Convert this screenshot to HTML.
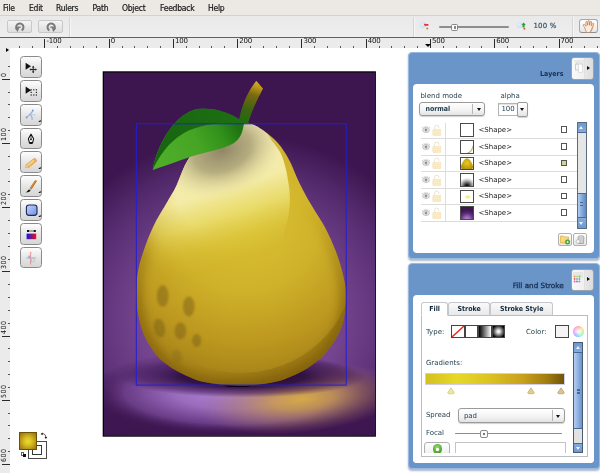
<!DOCTYPE html>
<html><head><meta charset="utf-8"><title>Editor</title>
<style>
*{box-sizing:border-box;margin:0;padding:0}
html,body{width:600px;height:473px;overflow:hidden;background:#fff}
body{position:relative;will-change:transform;font-family:"DejaVu Sans","Liberation Sans",sans-serif;font-size:7px;color:#1f3a4a}
.abs{position:absolute}
#menubar{position:absolute;left:0;top:0;width:600px;height:15px;background:#ece9e5}
#menubar span{position:absolute;top:2.6px;-webkit-text-stroke:0.2px #1a1a1a;font-family:"DejaVu Sans","Liberation Sans",sans-serif;font-stretch:condensed;font-size:8.5px;letter-spacing:-.25px;color:#1a1a1a;line-height:10px}
#toolbar{position:absolute;left:0;top:15px;width:600px;height:23.2px;background:linear-gradient(#e9e9e9,#eeeeee);border-top:1px solid #d2d2d2;border-bottom:1.4px solid #606060}
.tbtn{position:absolute;top:3.7px;height:13.6px;width:25.2px;border:1px solid #c8c8c8;border-radius:2px;background:linear-gradient(#f4f4f4,#dedede)}
.sep{position:absolute;top:0.5px;width:1px;height:20px;background:#d4d4d4;border-right:1px solid #f6f6f6;box-sizing:content-box}
#hruler{position:absolute;left:0;top:38px;width:600px;height:10px;background:#ebebeb}
#vruler{position:absolute;left:0;top:48px;width:10.4px;height:425px;background:#ebebeb;overflow:hidden}
.ht{position:absolute;width:1px;background:#555}
.vt{position:absolute;height:1px;background:#555}
.hn{position:absolute;top:-0.5px;letter-spacing:-.2px;font-size:7px;line-height:7px;color:#111;font-family:"DejaVu Sans",sans-serif}
.vn{position:absolute;left:1.2px;letter-spacing:.55px;font-stretch:condensed;font-size:7px;line-height:7px;color:#111;transform-origin:0 0;transform:rotate(-90deg);white-space:nowrap;font-family:"DejaVu Sans",sans-serif}
.tool{position:absolute;left:19.6px;width:22.2px;height:21.9px;border:1px solid #8a8a8a;border-radius:3.5px;background:linear-gradient(#fdfdfd,#e2e2e2 60%,#d6d6d6)}
.panel{position:absolute;left:407.6px;width:192.4px;background:#6a95c9;border:1px solid #9bb9de;border-radius:4px;box-shadow:0 1.5px 2px rgba(80,100,140,.45)}
.pinner{position:absolute;left:4.8px;right:5.3px;background:#fff;border-radius:4px}
.ptitle{position:absolute;font-weight:bold;font-stretch:condensed;color:#1b2f55;font-size:7px;white-space:nowrap;text-align:right}
.pbtn{position:absolute;width:23px;height:22.6px;border:1px solid #9aa3ad;border-radius:3px;background:linear-gradient(90deg,#fafafa 0,#f0f0f0 56%,#bdbdbd 57%,#e8e8e8 60%,#dcdcdc 100%)}
.lbl{position:absolute;white-space:nowrap;line-height:9px}
.combo{position:absolute;border:1px solid #9a9a9a;border-radius:3px;background:linear-gradient(#ffffff,#f3f3f3 60%,#e3e3e3);box-shadow:0 1px 1px rgba(0,0,0,.18)}
.arrow{position:absolute;width:0;height:0;border-left:2.8px solid transparent;border-right:2.8px solid transparent;border-top:3.6px solid #111}
.row{position:absolute;left:8px;width:156px;height:16.55px;border-bottom:1px solid #dcdcdc}
.thumb{position:absolute;left:38.3px;top:1px;width:14px;height:13.5px;border:1px solid #4a4a4a;background:#fff;overflow:hidden}
.chk{position:absolute;left:139.3px;top:4px;width:6.5px;height:6.5px;border:1px solid #555;background:#fff}
.shape{position:absolute;left:57px;top:3.4px;font-size:7px;line-height:9px;color:#222}

.b{font-weight:bold;font-stretch:condensed;font-size:7px}
.arrowr{position:absolute;width:0;height:0;border-top:2.4px solid transparent;border-bottom:2.4px solid transparent;border-left:3px solid #111}
.sbtn{position:absolute;width:14px;height:13px;border:1px solid #b0b0b0;border-radius:2px;background:linear-gradient(#fff,#e6e6e6)}
.tab{position:absolute;top:6.4px;height:14px;border:1px solid #c4c7cb;border-bottom:1px solid #b9bdc2;border-radius:3px 3px 0 0;background:linear-gradient(#fafafa,#e9e9e9);text-align:center;font-weight:bold;font-stretch:condensed;font-size:7px;line-height:12px;color:#14283c}
.tab.sel{background:#fff;border-bottom-color:#fff}
.sw{position:absolute;width:13.5px;height:12.5px;border:1px solid #444}
</style></head><body>

<div id="menubar">
<span style="left:3px">File</span><span style="left:29px">Edit</span><span style="left:56px">Rulers</span><span style="left:92.5px">Path</span><span style="left:122px">Object</span><span style="left:160px">Feedback</span><span style="left:208px">Help</span>
</div>

<div id="toolbar">
 <div class="tbtn" style="left:7.3px"><svg style="position:absolute;left:0;top:0" width="24" height="12" viewBox="0 0 24 12"><g transform=""><g transform="translate(12 6.2) scale(1.18) translate(-12 -5.9)"><path d="M9.6,8 A3.1,3.1 0 1 1 13.4,8.55" fill="none" stroke="#7a7a7a" stroke-width="1.7"/><path d="M7.6,6.6 L11.4,6.3 L10,10 Z" fill="#7a7a7a"/><path d="M9.4,5.9 L12.6,5.9" stroke="#7a7a7a" stroke-width="1.2"/></g></g></svg></div>
 <div class="tbtn" style="left:38.3px"><svg style="position:absolute;left:0;top:0" width="24" height="12" viewBox="0 0 24 12"><g transform="translate(24 0) scale(-1 1)"><g transform="translate(12 6.2) scale(1.18) translate(-12 -5.9)"><path d="M9.6,8 A3.1,3.1 0 1 1 13.4,8.55" fill="none" stroke="#7a7a7a" stroke-width="1.7"/><path d="M7.6,6.6 L11.4,6.3 L10,10 Z" fill="#7a7a7a"/><path d="M9.4,5.9 L12.6,5.9" stroke="#7a7a7a" stroke-width="1.2"/></g></g></svg></div>
 <div class="sep" style="left:69px"></div>
 <div class="sep" style="left:412.5px"></div>
 <div class="sep" style="left:571.5px"></div>
 <!-- zoom slider -->
 <svg style="position:absolute;left:418.6px;top:5.2px" width="12" height="10" viewBox="0 0 12 10"><circle cx="3.8" cy="4.2" r="3.1" fill="#d3e2f5"/><circle cx="3.2" cy="3.6" r="1.6" fill="#e4eefa"/><circle cx="8.2" cy="7.4" r="1" fill="#c08438"/><path d="M4.8,3.6 L6.4,2.2 L6.4,3 L9.4,3 L9.4,4.8 L6.4,4.8 L6.4,5.4Z" fill="#e8303c"/></svg>
 <div class="abs" style="left:439px;top:10.3px;width:70px;height:1.5px;background:#8e8e8e;border-radius:1px"></div>
 <div class="abs" style="left:451.3px;top:7.8px;width:7.2px;height:7.4px;border:1px solid #858585;border-radius:1.5px;background:#fafafa"><div class="abs" style="left:1.6px;top:1.6px;width:2px;height:2.2px;border-left:.7px solid #888;border-right:.7px solid #888"></div></div>
 <svg style="position:absolute;left:516.2px;top:5.2px" width="12" height="10" viewBox="0 0 12 10"><circle cx="3.8" cy="4.2" r="3.1" fill="#d3e2f5"/><circle cx="3.2" cy="3.6" r="1.6" fill="#e4eefa"/><circle cx="8.4" cy="7.8" r="1" fill="#d8603c"/><path d="M7.6,1.6 L9.8,4 L8.6,4 L8.6,6.4 L6.6,6.4 L6.6,4 L5.4,4Z" fill="#2aa030"/></svg>
 <div class="abs" style="left:533.4px;top:5.9px;font-size:7px;line-height:9px;color:#35566a;letter-spacing:0.2px;-webkit-text-stroke:.2px #35566a">100 %</div>
 <div class="abs" style="left:579.3px;top:3px;width:18.6px;height:14.4px;border:1px solid #a8a8a8;border-bottom-color:#909090;border-radius:3px;background:linear-gradient(#fff,#e6e6e6)"><svg style="position:absolute;left:1px;top:0px" width="16" height="13" viewBox="0 0 16 13"><g transform="translate(-0.6 -0.8) scale(1.32)"><path d="M3.4,6.6 C2.6,5.4 1.8,4.6 2.3,4.1 C2.9,3.6 3.7,4.5 4.3,5.3 L4.1,2.3 C4.1,1.5 5.1,1.5 5.2,2.3 L5.5,4.6 L5.7,1.6 C5.8,0.8 6.8,0.8 6.8,1.6 L6.9,4.6 L7.5,2.0 C7.7,1.3 8.6,1.5 8.5,2.3 L8.2,5.0 L9.1,3.4 C9.5,2.8 10.3,3.2 10.0,3.9 C9.4,5.4 9.2,7.0 8.4,8.4 C7.8,9.6 7.3,10.2 5.8,10.2 C4.600,10.2 4.0,9.0 3.4,6.6 Z" fill="#fbeee0" stroke="#c07840" stroke-width=".55" stroke-linejoin="round"/><path d="M7.4,9.6 C8.4,8.6 9,6.6 9.4,5" fill="none" stroke="#d8945c" stroke-width=".9" opacity=".7"/></g></svg></div>
</div>

<div id="hruler">
<div class="ht" style="left:18.6px;top:7.8px;height:2.2px"></div>
<div class="ht" style="left:31.5px;top:7.8px;height:2.2px"></div>
<div class="ht" style="left:44.3px;top:1px;height:9px;background:#2a2a2a"></div>
<div class="hn" style="left:46.4px">-100</div>
<div class="ht" style="left:57.2px;top:7.8px;height:2.2px"></div>
<div class="ht" style="left:70.0px;top:7.8px;height:2.2px"></div>
<div class="ht" style="left:82.9px;top:7.8px;height:2.2px"></div>
<div class="ht" style="left:95.7px;top:7.8px;height:2.2px"></div>
<div class="ht" style="left:108.6px;top:1px;height:9px;background:#2a2a2a"></div>
<div class="hn" style="left:110.7px">0</div>
<div class="ht" style="left:121.5px;top:7.8px;height:2.2px"></div>
<div class="ht" style="left:134.3px;top:7.8px;height:2.2px"></div>
<div class="ht" style="left:147.2px;top:7.8px;height:2.2px"></div>
<div class="ht" style="left:160.0px;top:7.8px;height:2.2px"></div>
<div class="ht" style="left:172.9px;top:1px;height:9px;background:#2a2a2a"></div>
<div class="hn" style="left:175.0px">100</div>
<div class="ht" style="left:185.7px;top:7.8px;height:2.2px"></div>
<div class="ht" style="left:198.6px;top:7.8px;height:2.2px"></div>
<div class="ht" style="left:211.4px;top:7.8px;height:2.2px"></div>
<div class="ht" style="left:224.3px;top:7.8px;height:2.2px"></div>
<div class="ht" style="left:237.1px;top:1px;height:9px;background:#2a2a2a"></div>
<div class="hn" style="left:239.2px">200</div>
<div class="ht" style="left:250.0px;top:7.8px;height:2.2px"></div>
<div class="ht" style="left:262.8px;top:7.8px;height:2.2px"></div>
<div class="ht" style="left:275.7px;top:7.8px;height:2.2px"></div>
<div class="ht" style="left:288.6px;top:7.8px;height:2.2px"></div>
<div class="ht" style="left:301.4px;top:1px;height:9px;background:#2a2a2a"></div>
<div class="hn" style="left:303.5px">300</div>
<div class="ht" style="left:314.3px;top:7.8px;height:2.2px"></div>
<div class="ht" style="left:327.1px;top:7.8px;height:2.2px"></div>
<div class="ht" style="left:340.0px;top:7.8px;height:2.2px"></div>
<div class="ht" style="left:352.8px;top:7.8px;height:2.2px"></div>
<div class="ht" style="left:365.7px;top:1px;height:9px;background:#2a2a2a"></div>
<div class="hn" style="left:367.8px">400</div>
<div class="ht" style="left:378.5px;top:7.8px;height:2.2px"></div>
<div class="ht" style="left:391.4px;top:7.8px;height:2.2px"></div>
<div class="ht" style="left:404.2px;top:7.8px;height:2.2px"></div>
<div class="ht" style="left:417.1px;top:7.8px;height:2.2px"></div>
<div class="ht" style="left:429.9px;top:1px;height:9px;background:#2a2a2a"></div>
<div class="hn" style="left:432.0px">500</div>
<div class="ht" style="left:442.8px;top:7.8px;height:2.2px"></div>
<div class="ht" style="left:455.7px;top:7.8px;height:2.2px"></div>
<div class="ht" style="left:468.5px;top:7.8px;height:2.2px"></div>
<div class="ht" style="left:481.4px;top:7.8px;height:2.2px"></div>
<div class="ht" style="left:494.2px;top:1px;height:9px;background:#2a2a2a"></div>
<div class="hn" style="left:496.3px">600</div>
<div class="ht" style="left:507.1px;top:7.8px;height:2.2px"></div>
<div class="ht" style="left:519.9px;top:7.8px;height:2.2px"></div>
<div class="ht" style="left:532.8px;top:7.8px;height:2.2px"></div>
<div class="ht" style="left:545.6px;top:7.8px;height:2.2px"></div>
<div class="ht" style="left:558.5px;top:1px;height:9px;background:#2a2a2a"></div>
<div class="hn" style="left:560.6px">700</div>
<div class="ht" style="left:571.3px;top:7.8px;height:2.2px"></div>
<div class="ht" style="left:584.2px;top:7.8px;height:2.2px"></div>
<div class="ht" style="left:597.1px;top:7.8px;height:2.2px"></div>
</div>
<div id="vruler">
<div class="vt" style="top:17.9px;left:8.3px;width:1.7px"></div>
<div class="vt" style="top:30.7px;left:2px;width:8px;background:#2a2a2a"></div>
<div class="vn" style="top:28.7px">0</div>
<div class="vt" style="top:43.5px;left:8.3px;width:1.7px"></div>
<div class="vt" style="top:56.4px;left:8.3px;width:1.7px"></div>
<div class="vt" style="top:69.2px;left:8.3px;width:1.7px"></div>
<div class="vt" style="top:82.1px;left:8.3px;width:1.7px"></div>
<div class="vt" style="top:94.9px;left:2px;width:8px;background:#2a2a2a"></div>
<div class="vn" style="top:92.9px">100</div>
<div class="vt" style="top:107.7px;left:8.3px;width:1.7px"></div>
<div class="vt" style="top:120.6px;left:8.3px;width:1.7px"></div>
<div class="vt" style="top:133.4px;left:8.3px;width:1.7px"></div>
<div class="vt" style="top:146.3px;left:8.3px;width:1.7px"></div>
<div class="vt" style="top:159.1px;left:2px;width:8px;background:#2a2a2a"></div>
<div class="vn" style="top:157.1px">200</div>
<div class="vt" style="top:171.9px;left:8.3px;width:1.7px"></div>
<div class="vt" style="top:184.8px;left:8.3px;width:1.7px"></div>
<div class="vt" style="top:197.6px;left:8.3px;width:1.7px"></div>
<div class="vt" style="top:210.5px;left:8.3px;width:1.7px"></div>
<div class="vt" style="top:223.3px;left:2px;width:8px;background:#2a2a2a"></div>
<div class="vn" style="top:221.3px">300</div>
<div class="vt" style="top:236.1px;left:8.3px;width:1.7px"></div>
<div class="vt" style="top:249.0px;left:8.3px;width:1.7px"></div>
<div class="vt" style="top:261.8px;left:8.3px;width:1.7px"></div>
<div class="vt" style="top:274.7px;left:8.3px;width:1.7px"></div>
<div class="vt" style="top:287.5px;left:2px;width:8px;background:#2a2a2a"></div>
<div class="vn" style="top:285.5px">400</div>
<div class="vt" style="top:300.3px;left:8.3px;width:1.7px"></div>
<div class="vt" style="top:313.2px;left:8.3px;width:1.7px"></div>
<div class="vt" style="top:326.0px;left:8.3px;width:1.7px"></div>
<div class="vt" style="top:338.9px;left:8.3px;width:1.7px"></div>
<div class="vt" style="top:351.7px;left:2px;width:8px;background:#2a2a2a"></div>
<div class="vn" style="top:349.7px">500</div>
<div class="vt" style="top:364.5px;left:8.3px;width:1.7px"></div>
<div class="vt" style="top:377.4px;left:8.3px;width:1.7px"></div>
<div class="vt" style="top:390.2px;left:8.3px;width:1.7px"></div>
<div class="vt" style="top:403.1px;left:8.3px;width:1.7px"></div>
<div class="vt" style="top:415.9px;left:2px;width:8px;background:#2a2a2a"></div>
<div class="vn" style="top:413.9px">600</div>
<div class="vt" style="top:428.7px;left:8.3px;width:1.7px"></div>
</div>
<!-- corner arrow -->
<div class="abs" style="left:5.6px;top:48.4px;width:0;height:0;border-top:2.8px solid transparent;border-bottom:2.8px solid transparent;border-left:3.2px solid #000"></div>
<div class="abs" style="left:425.2px;top:44.3px;width:0;height:0;border-left:3px solid transparent;border-right:3px solid transparent;border-top:3.2px solid #000"></div>

<!-- CANVAS -->
<svg class="abs" style="left:10px;top:48px" width="398" height="425" viewBox="10 48 398 425">
<defs>
 <radialGradient id="bg1" gradientUnits="userSpaceOnUse" cx="240" cy="318" r="200" gradientTransform="translate(240 318) scale(1 0.92) translate(-240 -318)">
  <stop offset="0" stop-color="#8656a4"/>
  <stop offset="0.5" stop-color="#74448e"/>
  <stop offset="0.78" stop-color="#582e72"/>
  <stop offset="1" stop-color="#3d1650"/>
 </radialGradient>
 <linearGradient id="botdark" gradientUnits="userSpaceOnUse" x1="0" y1="372" x2="0" y2="436">
  <stop offset="0" stop-color="#3d1650" stop-opacity="0"/>
  <stop offset="0.35" stop-color="#3d1650" stop-opacity=".85"/>
  <stop offset="1" stop-color="#3d1650" stop-opacity="1"/>
 </linearGradient>
 <radialGradient id="floor" gradientUnits="userSpaceOnUse" cx="232" cy="392" r="143" gradientTransform="translate(232 392) scale(1 0.3) translate(-232 -392)">
  <stop offset="0" stop-color="#b084d2" stop-opacity="1"/>
  <stop offset="0.4" stop-color="#9a6cbe" stop-opacity="1"/>
  <stop offset="0.75" stop-color="#6e408c" stop-opacity=".9"/>
  <stop offset="1" stop-color="#3d1650" stop-opacity="0"/>
 </radialGradient>
 <radialGradient id="glow" gradientUnits="userSpaceOnUse" cx="302" cy="399" r="102" gradientTransform="translate(302 399) rotate(-6) scale(1 0.33) translate(-302 -399)">
  <stop offset="0" stop-color="#dcb040" stop-opacity=".92"/>
  <stop offset="0.3" stop-color="#cea04a" stop-opacity=".8"/>
  <stop offset="0.65" stop-color="#b48462" stop-opacity=".45"/>
  <stop offset="1" stop-color="#a06a70" stop-opacity="0"/>
 </radialGradient>
 <radialGradient id="shadow" gradientUnits="userSpaceOnUse" cx="243" cy="376.500" r="124" gradientTransform="translate(243 376.500) scale(1 0.17) translate(-243 -376.500)">
  <stop offset="0" stop-color="#1a0428" stop-opacity="1"/>
  <stop offset="0.5" stop-color="#280a3c" stop-opacity=".9"/>
  <stop offset="0.8" stop-color="#38124c" stop-opacity=".5"/>
  <stop offset="1" stop-color="#3d1650" stop-opacity="0"/>
 </radialGradient>
 <linearGradient id="bandfill" gradientUnits="userSpaceOnUse" x1="185" y1="0" x2="275" y2="0">
  <stop offset="0" stop-color="#7a5a08" stop-opacity="0"/>
  <stop offset="1" stop-color="#7a5a08" stop-opacity=".34"/>
 </linearGradient>
 <linearGradient id="basefill" gradientUnits="userSpaceOnUse" x1="200" y1="130" x2="300" y2="390">
  <stop offset="0" stop-color="#d4b832"/>
  <stop offset="0.45" stop-color="#b48e1c"/>
  <stop offset="1" stop-color="#967010"/>
 </linearGradient>
 <radialGradient id="body" gradientUnits="userSpaceOnUse" cx="245" cy="215" r="178">
  <stop offset="0" stop-color="#dac232"/>
  <stop offset="0.42" stop-color="#d0b22a"/>
  <stop offset="0.72" stop-color="#bc981f"/>
  <stop offset="1" stop-color="#9e7a16"/>
 </radialGradient>
 <linearGradient id="hiV" gradientUnits="userSpaceOnUse" x1="250" y1="125" x2="288.400" y2="247.100">
  <stop offset="0" stop-color="#f5efbc" stop-opacity="1"/>
  <stop offset="0.42" stop-color="#f3eba6" stop-opacity="1"/>
  <stop offset="0.62" stop-color="#ece074" stop-opacity=".85"/>
  <stop offset="0.82" stop-color="#e2ce48" stop-opacity=".4"/>
  <stop offset="1" stop-color="#dcc432" stop-opacity="0"/>
 </linearGradient>
 <radialGradient id="hiR" gradientUnits="userSpaceOnUse" cx="238" cy="170" r="135" gradientTransform="translate(238 170) rotate(15) scale(0.85 1) translate(-238 -170)">
  <stop offset="0" stop-color="#fff" stop-opacity="1"/>
  <stop offset="0.55" stop-color="#fff" stop-opacity="1"/>
  <stop offset="0.8" stop-color="#fff" stop-opacity=".6"/>
  <stop offset="1" stop-color="#fff" stop-opacity="0"/>
 </radialGradient>
 <mask id="hiMask" maskUnits="userSpaceOnUse" x="120" y="100" width="240" height="200"><rect x="120" y="100" width="240" height="200" fill="url(#hiR)"/></mask>
 <radialGradient id="leafsh" gradientUnits="userSpaceOnUse" cx="222" cy="150" r="66" gradientTransform="translate(222 150) rotate(-20) scale(1 0.7) translate(-222 -150)">
  <stop offset="0" stop-color="#8a8060" stop-opacity=".95"/>
  <stop offset="0.45" stop-color="#a0966f" stop-opacity=".75"/>
  <stop offset="0.75" stop-color="#c8bd8a" stop-opacity=".35"/>
  <stop offset="1" stop-color="#e8dea8" stop-opacity="0"/>
 </radialGradient>
 <linearGradient id="stem" gradientUnits="userSpaceOnUse" x1="243" y1="124" x2="257" y2="82">
  <stop offset="0" stop-color="#1f6a10"/>
  <stop offset="0.35" stop-color="#3d6410"/>
  <stop offset="0.7" stop-color="#7a6a10"/>
  <stop offset="0.88" stop-color="#b8941a"/>
  <stop offset="1" stop-color="#d4aa20"/>
 </linearGradient>
 <linearGradient id="leafD" gradientUnits="userSpaceOnUse" x1="160" y1="160" x2="240" y2="112">
  <stop offset="0" stop-color="#176410"/>
  <stop offset="1" stop-color="#1d7012"/>
 </linearGradient>
 <linearGradient id="leafL" gradientUnits="userSpaceOnUse" x1="165" y1="168" x2="238" y2="128">
  <stop offset="0" stop-color="#4fae28"/>
  <stop offset="0.5" stop-color="#45a424"/>
  <stop offset="0.8" stop-color="#30901a"/>
  <stop offset="1" stop-color="#1f7412"/>
 </linearGradient>
 <filter id="blur1" x="-20%" y="-20%" width="140%" height="140%"><feGaussianBlur stdDeviation="0.9"/></filter>
 <filter id="blur4" x="-20%" y="-20%" width="140%" height="140%"><feGaussianBlur stdDeviation="4.5"/></filter>
 <linearGradient id="lowG" gradientUnits="userSpaceOnUse" x1="0" y1="205" x2="0" y2="300"><stop offset="0" stop-color="#000"/><stop offset="1" stop-color="#fff"/></linearGradient>
 <mask id="lowMask" maskUnits="userSpaceOnUse" x="120" y="110" width="240" height="290"><rect x="120" y="110" width="240" height="290" fill="url(#lowG)"/></mask>
 <clipPath id="artclip"><rect x="104" y="72.500" width="271" height="363"/></clipPath>
 <clipPath id="pearclip"><path id="pearpath" d="M247.0,123.8 C252.5,123.8 254.2,124.9 259.0,127.7 C263.8,130.5 271.1,136.2 275.5,140.4 C279.9,144.6 282.4,148.8 285.2,153.0 C287.9,157.2 290.0,161.6 292.0,165.8 C294.0,170.1 295.4,174.3 297.3,178.5 C299.2,182.7 301.3,186.8 303.5,191.0 C305.7,195.2 308.1,199.6 310.6,203.8 C313.1,208.1 316.0,212.3 318.5,216.5 C321.0,220.7 323.0,223.4 325.8,229.0 C328.6,234.6 332.5,242.7 335.3,250.0 C338.1,257.3 340.8,265.5 342.6,273.0 C344.4,280.5 345.9,287.2 346.0,295.0 C346.1,302.8 345.0,313.0 343.5,320.0 C342.0,327.0 339.9,331.4 336.8,337.0 C333.7,342.6 328.5,349.6 325.0,353.8 C321.5,358.0 319.4,359.5 315.7,362.3 C312.0,365.1 308.2,368.0 303.0,370.8 C297.8,373.6 290.6,377.1 284.4,379.2 C278.2,381.3 272.6,382.6 266.0,383.6 C259.4,384.7 251.7,385.3 245.0,385.5 C238.3,385.7 231.7,385.2 226.0,384.8 C220.3,384.4 216.3,384.2 211.0,383.3 C205.7,382.4 200.1,381.3 194.4,379.2 C188.7,377.1 181.7,373.6 176.6,370.8 C171.5,368.0 167.5,365.1 164.0,362.3 C160.5,359.5 158.7,358.0 155.5,353.8 C152.3,349.6 147.7,342.6 145.0,337.0 C142.3,331.4 140.9,326.8 139.4,320.0 C137.9,313.2 136.3,303.8 136.0,296.0 C135.7,288.2 136.6,280.4 137.8,273.0 C139.0,265.6 140.8,259.3 143.4,251.5 C146.0,243.7 149.5,234.4 153.6,226.0 C157.7,217.6 164.4,207.1 168.0,200.8 C171.6,194.5 173.2,192.2 175.3,188.0 C177.4,183.8 178.8,179.6 180.6,175.4 C182.4,171.2 184.0,166.8 186.3,162.7 C188.6,158.6 191.0,155.0 194.5,151.0 C198.0,147.0 202.2,142.6 207.5,138.8 C212.8,135.0 219.4,130.5 226.0,128.0 C232.6,125.5 241.5,123.8 247.0,123.8 Z"/></clipPath>
</defs>
<rect x="103.600" y="72.200" width="271.400" height="363.600" fill="#3d1650" stroke="#000" stroke-width="1.800"/>
<g clip-path="url(#artclip)">
 <rect x="104" y="72" width="271" height="364" fill="url(#bg1)"/>
 <rect x="104" y="360" width="271" height="76" fill="url(#botdark)"/>
 <rect x="104" y="340" width="271" height="96" fill="url(#floor)"/>
 <rect x="104" y="340" width="271" height="96" fill="url(#glow)"/>
 <rect x="104" y="340" width="271" height="96" fill="url(#shadow)"/>
 <ellipse cx="238" cy="385.500" rx="14" ry="1.600" fill="#0c0218"/>
</g>
<!-- stem -->
<path d="M238.400,124 C240.500,110 245,98 251,88.300 L256.200,80.800 L263,88.600 C257.500,100 251,111 247.600,126 Z" fill="url(#stem)"/>
<!-- pear -->
<use href="#pearpath" fill="url(#body)"/>
<g clip-path="url(#pearclip)">
 <path d="M120,270 L128,270 A112,103 0 0 0 352,270 L360,270 L360,395 L120,395 Z" fill="url(#bandfill)"/>
 <g mask="url(#lowMask)"><use href="#pearpath" fill="none" stroke="#6a4c06" stroke-width="13" opacity=".42" filter="url(#blur4)"/></g>
 <g mask="url(#hiMask)"><path d="M250,122 C256,123.500 259,125 262,127.500 C266,131 269,136 271.700,140.400 C275,145 278.500,149 280.600,153 C282.500,157 284,161.500 285,165.800 C286.200,170 287.200,174 287.700,178.500 C288.500,183 289.200,187 289.500,191 C289.900,195.500 290,200 289.800,204 C289.500,209 289,213 288.500,216.500 C287.500,222 286,227 284,233 L284,290 L130,290 L130,122 Z" fill="url(#hiV)"/></g>
 <rect x="130" y="110" width="220" height="140" fill="url(#leafsh)"/>
 <g fill="#7c6014" fill-opacity=".5" filter="url(#blur1)">
  <ellipse cx="162.700" cy="296" rx="5.800" ry="11"/>
  <ellipse cx="188.800" cy="306.500" rx="5.800" ry="10"/>
  <ellipse cx="159.500" cy="328" rx="5.500" ry="9.500" transform="rotate(-12 159.500 328)"/>
  <ellipse cx="180.500" cy="331" rx="5.800" ry="8.500"/>
  <ellipse cx="196.700" cy="340.500" rx="4.500" ry="6.500"/>
  <ellipse cx="177" cy="356" rx="4.500" ry="6.500" fill-opacity=".3" transform="rotate(-20 177 356)"/>
 </g>
</g>
<!-- leaf -->
<path d="M152.700,170 C158,140 178,112 198,109 C216,107 234,114 244,123 C243,132 240,139 234,143 C222,150 204,152 190,157 C176,162 164,166 152.700,170 Z" fill="url(#leafL)"/>
<path d="M152.700,170 C158,140 178,112 198,109 C216,107 234,114 244,123 C222,122 200,124 184,133 C168,142 158,158 152.700,170 Z" fill="url(#leafD)"/>
<!-- selection box -->
<rect x="136.300" y="123.800" width="209.900" height="261.300" fill="none" stroke="#2020d8" stroke-width="1"/>

</svg>

<!-- tools -->
<div class="tool" style="top:56.2px"><svg style="position:absolute;left:0;top:0" width="20" height="20" viewBox="0 0 20 20"><path d="M4.6,5.8 L4.6,12.8 L10,9.3 Z" fill="#111"/><path d="M12.2,9.6 L12.2,15.4 M9.3,12.5 L15.1,12.5" stroke="#222" stroke-width="1"/><path d="M12.2,8.8 L13.5,10.4 L10.9,10.4Z M12.2,16.2 L13.5,14.6 L10.9,14.6Z M8.5,12.5 L10.1,11.2 L10.1,13.8Z M15.9,12.5 L14.3,11.2 L14.3,13.8Z" fill="#222"/></svg></div>
<div class="tool" style="top:80.0px"><svg style="position:absolute;left:0;top:0" width="20" height="20" viewBox="0 0 20 20"><path d="M4.6,5.6 L4.6,12.8 L10.2,9.2 Z" fill="#111"/><rect x="9.6" y="8.2" width="1.2" height="1.2" fill="#222"/><rect x="9.6" y="10.8" width="1.2" height="1.2" fill="#222"/><rect x="9.6" y="13.4" width="1.2" height="1.2" fill="#222"/><rect x="12.2" y="8.2" width="1.2" height="1.2" fill="#222"/><rect x="12.2" y="13.4" width="1.2" height="1.2" fill="#222"/><rect x="14.8" y="8.2" width="1.2" height="1.2" fill="#222"/><rect x="14.8" y="10.8" width="1.2" height="1.2" fill="#222"/><rect x="14.8" y="13.4" width="1.2" height="1.2" fill="#222"/></svg></div>
<div class="tool" style="top:103.8px"><svg style="position:absolute;left:0;top:0" width="20" height="20" viewBox="0 0 20 20"><path d="M5.5,12.5 C8,10.5 10.5,8.5 11.8,5.5" fill="none" stroke="#9ab8e4" stroke-width="1.3"/><path d="M9.2,8.6 C10.5,10.5 11.5,12.5 11.2,15" fill="none" stroke="#9ab8e4" stroke-width="1.3"/><path d="M9,8.8 L14.5,10.2" stroke="#b8c4d4" stroke-width=".8"/><circle cx="11.8" cy="5.5" r=".9" fill="#7a9ccc"/><circle cx="5.5" cy="12.5" r=".9" fill="#7a9ccc"/><path d="M17.3,17 L19.6,14.7 L19.6,17 Z" fill="#111"/></svg></div>
<div class="tool" style="top:127.6px"><svg style="position:absolute;left:0;top:0" width="20" height="20" viewBox="0 0 20 20"><path d="M10,5.2 L12.6,9.8 L11.6,13.6 L8.4,13.6 L7.4,9.8 Z" fill="#fff" stroke="#111" stroke-width="1.1" stroke-linejoin="round"/><path d="M10,5.6 L10,10" stroke="#111" stroke-width=".8"/><circle cx="10" cy="10.4" r=".9" fill="#111"/><path d="M8.4,14.4 L11.6,14.4" stroke="#111" stroke-width="1.2"/></svg></div>
<div class="tool" style="top:151.4px"><svg style="position:absolute;left:0;top:0" width="20" height="20" viewBox="0 0 20 20"><g transform="rotate(-38 10.5 11)"><rect x="5.5" y="9" width="9" height="3.8" rx=".6" fill="#f4bc62" stroke="#dc9c3c" stroke-width=".6"/><path d="M5.5,9 L2.6,10.9 L5.5,12.8 Z" fill="#f8dca4" stroke="#dc9c3c" stroke-width=".5"/><rect x="14.5" y="9" width="1.8" height="3.8" rx=".8" fill="#f0a0a0" stroke="#dc9c3c" stroke-width=".4"/><path d="M6,10.3 L14,10.3" stroke="#fce0a0" stroke-width=".9"/></g><path d="M17.3,17 L19.6,14.7 L19.6,17 Z" fill="#111"/></svg></div>
<div class="tool" style="top:175.2px"><svg style="position:absolute;left:0;top:0" width="20" height="20" viewBox="0 0 20 20"><path d="M15,4.2 C15.8,4.4 15.9,5 15.5,5.8 L10.6,13.2 L8.8,12 L13.6,4.8 C14,4.2 14.5,4 15,4.2 Z" fill="#c06a1c"/><path d="M14.6,4.6 L9.9,11.8" stroke="#e8a050" stroke-width=".8"/><path d="M8.8,12 L10.6,13.2 L9.6,14.6 L7.8,13.4 Z" fill="#b0b0b0"/><path d="M7.8,13.4 L9.6,14.6 C9,16 7.5,16.3 4.6,16.4 C5.8,15.8 6.6,14.8 7.8,13.4 Z" fill="#111"/><path d="M17.3,17 L19.6,14.7 L19.6,17 Z" fill="#111"/></svg></div>
<div class="tool" style="top:199.0px"><svg style="position:absolute;left:0;top:0" width="20" height="20" viewBox="0 0 20 20"><defs><linearGradient id="rr" x1="0" y1="0" x2="1" y2="1"><stop offset="0" stop-color="#c4d4f8"/><stop offset="1" stop-color="#6f8fe6"/></linearGradient></defs><rect x="5.4" y="5" width="10.6" height="10.4" rx="2.6" fill="url(#rr)" stroke="#1a2a5a" stroke-width="1.1"/><path d="M17.3,17 L19.6,14.7 L19.6,17 Z" fill="#111"/></svg></div>
<div class="tool" style="top:222.8px"><svg style="position:absolute;left:0;top:0" width="20" height="20" viewBox="0 0 20 20"><defs><linearGradient id="gt" x1="0" y1="0" x2="1" y2="0"><stop offset="0" stop-color="#1414e8"/><stop offset="1" stop-color="#f01414"/></linearGradient></defs><rect x="5.6" y="9.6" width="9.6" height="5.6" fill="url(#gt)"/><path d="M7,7 L13.8,7" stroke="#222" stroke-width=".7"/><rect x="6" y="6" width="2" height="2" fill="#111"/><rect x="12.8" y="6" width="2" height="2" fill="#111"/></svg></div>
<div class="tool" style="top:246.6px"><svg style="position:absolute;left:0;top:0" width="20" height="20" viewBox="0 0 20 20"><g opacity=".55"><path d="M9.6,4 L9.6,16.5" stroke="#e84040" stroke-width=".9"/><path d="M5.5,10 L15,10" stroke="#5a7ae0" stroke-width=".9"/><rect x="7.2" y="7.6" width="2" height="2.4" fill="#5a7ae0"/><rect x="10.6" y="10.8" width="2.6" height="3" fill="none" stroke="#999" stroke-width=".6"/><path d="M8.6,5.2 L9.6,3.6 L10.6,5.2Z" fill="#e84040"/></g></svg></div>
<div class="abs" style="left:27.5px;top:440.7px;width:19px;height:18.8px;border:1px solid #4a4a4a;background:#fff"></div>
<div class="abs" style="left:32px;top:445px;width:9.8px;height:9.6px;border:1px solid #3a3a3a;background:#fff"></div>
<div class="abs" style="left:19.3px;top:432.3px;width:17.8px;height:17.8px;border:1px solid #6a5208;background:radial-gradient(circle at 50% 52%,#ecdc2a 0,#d8be24 35%,#b08a14 75%,#96700c 100%)"></div>
<svg class="abs" style="left:39.5px;top:432px" width="8" height="8" viewBox="0 0 8 8"><path d="M1.6,1.6 C4,1.2 6,3 5.9,5.6" fill="none" stroke="#222" stroke-width=".8"/><path d="M0.6,1.9 L2.6,0.4 L2.6,3.2Z" fill="#222"/><path d="M5.9,7 L4.5,5 L7.3,5Z" fill="#222"/></svg>
<div class="abs" style="left:20.7px;top:452.3px;width:3.6px;height:3.4px;border:.6px solid #666;background:#fff"></div>
<div class="abs" style="left:22.6px;top:454px;width:3.4px;height:3.2px;background:#111"></div>

<!-- LAYERS PANEL -->
<div class="panel" style="top:51.5px;height:207px">
 <div class="ptitle" style="right:35.6px;top:17.4px;line-height:9px">Layers</div>
 <div class="pbtn" style="left:162.5px;top:4.6px"><svg style="position:absolute;left:0.5px;top:1px" width="12" height="18" viewBox="0 0 12 18"><path d="M2.500,5 L5,3.500 L9.500,5.500 L9.500,13 L5.500,13 L5.500,5.500 L2.500,5 L2.500,11 L5.500,11" fill="none" stroke="#b8bcc4" stroke-width=".7"/><rect x="5.600" y="5.600" width="3.800" height="7.300" fill="#fff"/><path d="M1,1 L11,1 L11,8 L1,3Z" fill="#e2e2e2" opacity=".6"/></svg><div class="arrowr" style="left:15px;top:7.5px"></div></div>
 <div class="pinner" style="top:31.3px;height:168.9px">
  <div class="lbl" style="left:7px;top:8px">blend mode</div>
  <div class="lbl" style="left:87px;top:8px">alpha</div>
  <div class="combo" style="left:6px;top:18.3px;width:66px;height:14.2px">
    <div class="lbl b" style="left:5px;top:2px">normal</div>
    <div class="abs" style="left:52px;top:1px;width:1px;height:10px;background:#b8b8b8"></div>
    <div class="arrow" style="left:56.5px;top:5px"></div>
  </div>
  <div class="abs" style="left:85px;top:19px;width:20px;height:13.5px;border:1px solid #b4b4b4;border-right:none;background:#fff;box-shadow:inset 0 1px 1px rgba(0,0,0,.12)"><div class="lbl" style="left:2px;top:1.5px">100</div></div>
  <div class="combo" style="left:104px;top:18.3px;width:10.5px;height:14.5px;border-radius:2px"><div class="arrow" style="left:2px;top:5px;border-left-width:2.3px;border-right-width:2.3px;border-top-width:3.2px"></div></div>

  <div class="abs" style="left:31.5px;top:39px;width:1px;height:99px;background:#dedede"></div>
  <div class="row" style="top:38.5px;height:17px"><svg style="position:absolute;left:-2.5px;top:-0.5px" width="22" height="16" viewBox="0 0 22 16"><g opacity=".8"><ellipse cx="7" cy="8" rx="3.4" ry="2.500" fill="#e8e8e8" stroke="#8a8a8a" stroke-width=".6"/><circle cx="7" cy="8" r="1.400" fill="#7a7a7a"/><path d="M3.800,6.200 L3.200,5 M5.400,5.400 L5.100,4.200 M7,5.200 L7,3.900 M8.600,5.400 L8.900,4.200 M10.200,6.200 L10.800,5" stroke="#8a8a8a" stroke-width=".5"/></g><g opacity=".8"><path d="M15.600,7.200 L15.600,5.200 A2.100,2.100 0 0 1 19.800,5.200 L19.800,6" fill="none" stroke="#e4dcc8" stroke-width="1"/><rect x="13.800" y="7.400" width="8.400" height="6" rx=".6" fill="#fbe8bc" stroke="#f0d49c" stroke-width=".6"/><path d="M14.200,9.400 L21.800,9.400 M14.200,11.400 L21.800,11.400" stroke="#f4dcA8" stroke-width=".5"/></g></svg><div class="thumb"></div><div class="shape">&lt;Shape&gt;</div><div class="chk"></div></div>
  <div class="row" style="top:55.5px"><svg style="position:absolute;left:-2.5px;top:-0.5px" width="22" height="16" viewBox="0 0 22 16"><g opacity=".8"><ellipse cx="7" cy="8" rx="3.4" ry="2.500" fill="#e8e8e8" stroke="#8a8a8a" stroke-width=".6"/><circle cx="7" cy="8" r="1.400" fill="#7a7a7a"/><path d="M3.800,6.200 L3.200,5 M5.400,5.400 L5.100,4.200 M7,5.200 L7,3.900 M8.600,5.400 L8.900,4.200 M10.200,6.200 L10.800,5" stroke="#8a8a8a" stroke-width=".5"/></g><g opacity=".8"><path d="M15.600,7.200 L15.600,5.200 A2.100,2.100 0 0 1 19.800,5.200 L19.800,6" fill="none" stroke="#e4dcc8" stroke-width="1"/><rect x="13.800" y="7.400" width="8.400" height="6" rx=".6" fill="#fbe8bc" stroke="#f0d49c" stroke-width=".6"/><path d="M14.200,9.400 L21.800,9.400 M14.200,11.400 L21.800,11.400" stroke="#f4dcA8" stroke-width=".5"/></g></svg><div class="thumb"><svg width="12" height="12" viewBox="0 0 12 12" style="position:absolute;left:0;top:0"><path d="M12,5 C11.4,8.5 9.5,11 6.5,12 L8.5,12 C10.5,11 11.6,9 12,7 Z" fill="#cdbf8e"/><path d="M12,4.6 C11.4,8.3 9.4,11 6,12.2" fill="none" stroke="#a89868" stroke-width=".6"/></svg></div><div class="shape">&lt;Shape&gt;</div><div class="chk"></div></div>
  <div class="row" style="top:72.0px"><svg style="position:absolute;left:-2.5px;top:-0.5px" width="22" height="16" viewBox="0 0 22 16"><g opacity=".8"><ellipse cx="7" cy="8" rx="3.4" ry="2.500" fill="#e8e8e8" stroke="#8a8a8a" stroke-width=".6"/><circle cx="7" cy="8" r="1.400" fill="#7a7a7a"/><path d="M3.800,6.200 L3.200,5 M5.400,5.400 L5.100,4.200 M7,5.200 L7,3.900 M8.600,5.400 L8.900,4.200 M10.200,6.200 L10.800,5" stroke="#8a8a8a" stroke-width=".5"/></g><g opacity=".8"><path d="M15.600,7.200 L15.600,5.200 A2.100,2.100 0 0 1 19.800,5.200 L19.800,6" fill="none" stroke="#e4dcc8" stroke-width="1"/><rect x="13.800" y="7.400" width="8.400" height="6" rx=".6" fill="#fbe8bc" stroke="#f0d49c" stroke-width=".6"/><path d="M14.200,9.400 L21.800,9.400 M14.200,11.400 L21.800,11.400" stroke="#f4dcA8" stroke-width=".5"/></g></svg><div class="thumb" style="background:#fff"><svg width="12" height="12" viewBox="0 0 12 12" style="position:absolute;left:0;top:0"><defs><radialGradient id="tg" cx=".5" cy=".4" r=".7"><stop offset="0" stop-color="#e8cc20"/><stop offset="1" stop-color="#a88208"/></radialGradient></defs><path d="M6,0.300 C8.500,0.300 12,6 12,9 C12,11.500 10,12 6,12 C2,12 0,11.500 0,9 C0,6 3.500,0.300 6,0.300 Z" fill="url(#tg)"/></svg></div><div class="shape">&lt;Shape&gt;</div><div class="chk" style="background:#d2d294"></div></div>
  <div class="row" style="top:88.5px"><svg style="position:absolute;left:-2.5px;top:-0.5px" width="22" height="16" viewBox="0 0 22 16"><g opacity=".8"><ellipse cx="7" cy="8" rx="3.4" ry="2.500" fill="#e8e8e8" stroke="#8a8a8a" stroke-width=".6"/><circle cx="7" cy="8" r="1.400" fill="#7a7a7a"/><path d="M3.800,6.200 L3.200,5 M5.400,5.400 L5.100,4.200 M7,5.200 L7,3.900 M8.600,5.400 L8.900,4.200 M10.200,6.200 L10.800,5" stroke="#8a8a8a" stroke-width=".5"/></g><g opacity=".8"><path d="M15.600,7.200 L15.600,5.200 A2.100,2.100 0 0 1 19.800,5.200 L19.800,6" fill="none" stroke="#e4dcc8" stroke-width="1"/><rect x="13.800" y="7.400" width="8.400" height="6" rx=".6" fill="#fbe8bc" stroke="#f0d49c" stroke-width=".6"/><path d="M14.200,9.400 L21.800,9.400 M14.200,11.400 L21.800,11.400" stroke="#f4dcA8" stroke-width=".5"/></g></svg><div class="thumb" style="background:radial-gradient(ellipse 75% 70% at 50% 100%,#000 0,#222 18%,#888 50%,#ddd 80%,#fff 100%)"></div><div class="shape">&lt;Shape&gt;</div><div class="chk"></div></div>
  <div class="row" style="top:105.0px"><svg style="position:absolute;left:-2.5px;top:-0.5px" width="22" height="16" viewBox="0 0 22 16"><g opacity=".8"><ellipse cx="7" cy="8" rx="3.4" ry="2.500" fill="#e8e8e8" stroke="#8a8a8a" stroke-width=".6"/><circle cx="7" cy="8" r="1.400" fill="#7a7a7a"/><path d="M3.800,6.200 L3.200,5 M5.400,5.400 L5.100,4.200 M7,5.200 L7,3.900 M8.600,5.400 L8.900,4.200 M10.200,6.200 L10.800,5" stroke="#8a8a8a" stroke-width=".5"/></g><g opacity=".8"><path d="M15.600,7.200 L15.600,5.200 A2.100,2.100 0 0 1 19.800,5.200 L19.800,6" fill="none" stroke="#e4dcc8" stroke-width="1"/><rect x="13.800" y="7.400" width="8.400" height="6" rx=".6" fill="#fbe8bc" stroke="#f0d49c" stroke-width=".6"/><path d="M14.200,9.400 L21.800,9.400 M14.200,11.400 L21.800,11.400" stroke="#f4dcA8" stroke-width=".5"/></g></svg><div class="thumb" style="background:radial-gradient(ellipse 30% 20% at 56% 54%,#f6e860 0,#faf29c 55%,#fff 100%)"></div><div class="shape">&lt;Shape&gt;</div><div class="chk"></div></div>
  <div class="row" style="top:121.5px"><svg style="position:absolute;left:-2.5px;top:-0.5px" width="22" height="16" viewBox="0 0 22 16"><g opacity=".8"><ellipse cx="7" cy="8" rx="3.4" ry="2.500" fill="#e8e8e8" stroke="#8a8a8a" stroke-width=".6"/><circle cx="7" cy="8" r="1.400" fill="#7a7a7a"/><path d="M3.800,6.200 L3.200,5 M5.400,5.400 L5.100,4.200 M7,5.200 L7,3.900 M8.600,5.400 L8.900,4.200 M10.200,6.200 L10.800,5" stroke="#8a8a8a" stroke-width=".5"/></g><g opacity=".8"><path d="M15.600,7.200 L15.600,5.200 A2.100,2.100 0 0 1 19.800,5.200 L19.800,6" fill="none" stroke="#e4dcc8" stroke-width="1"/><rect x="13.800" y="7.400" width="8.400" height="6" rx=".6" fill="#fbe8bc" stroke="#f0d49c" stroke-width=".6"/><path d="M14.200,9.400 L21.800,9.400 M14.200,11.400 L21.800,11.400" stroke="#f4dcA8" stroke-width=".5"/></g></svg><div class="thumb" style="background:radial-gradient(ellipse 85% 75% at 50% 100%,#b88ad6 0,#8a58a8 35%,#5a2a78 65%,#3d1650 100%)"></div><div class="shape">&lt;Shape&gt;</div><div class="chk"></div></div>

  <!-- scrollbar -->
  <div class="abs" style="left:163.5px;top:37.8px;width:10px;height:107.5px;background:#e6e6e6;border:1px solid #5c6c80">
    <div class="abs" style="left:0;top:0;width:8px;height:10px;background:linear-gradient(#6d99d0,#86abdc);border-bottom:1px solid #4a6a96"></div>
    <div class="abs" style="left:1.5px;top:3px;width:0;height:0;border-left:2.5px solid transparent;border-right:2.5px solid transparent;border-bottom:3px solid #eaf2ff"></div>
    <div class="abs" style="left:0;top:70px;width:8px;height:25.5px;background:linear-gradient(90deg,#b4cdee,#7aa2d8 60%,#5c88c4);border-top:1px solid #4a6a96;border-bottom:1px solid #4a6a96"></div>
    <div class="abs" style="left:2.5px;top:79.5px;width:3px;height:6px;background:repeating-linear-gradient(#4a6a96 0,#4a6a96 .7px,transparent .7px,transparent 1.5px)"></div>
    <div class="abs" style="left:0;top:95.5px;width:8px;height:9.5px;background:linear-gradient(#86abdc,#6d99d0)"></div>
    <div class="abs" style="left:1.5px;top:99px;width:0;height:0;border-left:2.5px solid transparent;border-right:2.5px solid transparent;border-top:3px solid #eaf2ff"></div>
  </div>
  <!-- bottom buttons -->
  <div class="sbtn" style="left:144.5px;top:149px"><svg style="position:absolute;left:0;top:0" width="12" height="11" viewBox="0 0 12 11"><path d="M1.500,2 L4.500,2 L5.500,3 L9.500,3 L9.500,9 L1.500,9 Z" fill="#f8d878" stroke="#d8a840" stroke-width=".6"/><circle cx="8.600" cy="8" r="2.300" fill="#48a838" stroke="#2a7a20" stroke-width=".4"/><path d="M8.600,6.800 L8.600,9.200 M7.400,8 L9.800,8" stroke="#fff" stroke-width=".7"/></svg></div>
  <div class="sbtn" style="left:160px;top:149px"><svg style="position:absolute;left:0;top:0" width="12" height="11" viewBox="0 0 12 11"><ellipse cx="7" cy="3" rx="3" ry="1.200" fill="#e0e0e0" stroke="#888" stroke-width=".6"/><path d="M4,3 L4.500,9.500 L9.500,9.500 L10,3" fill="#d0d0d0" stroke="#888" stroke-width=".6"/><circle cx="4" cy="7.500" r="2" fill="#f4f4f4" stroke="#999" stroke-width=".5"/></svg></div>
 </div>
</div>

<!-- FILL & STROKE PANEL -->
<div class="panel" style="top:262.5px;height:206.5px">
 <div class="ptitle" style="right:35.3px;top:17px;line-height:9px;font-weight:normal;font-stretch:normal;font-size:7.25px;-webkit-text-stroke:.3px #1b2f55">Fill and Stroke</div>
 <div class="pbtn" style="left:162.4px;top:5px"><svg style="position:absolute;left:0.5px;top:1px" width="12" height="18" viewBox="0 0 12 18"><rect x=".5" y="1" width="10.500" height="6" fill="#dcdcdc" opacity=".6"/><circle cx="2.6" cy="5.5" r=".95" fill="#e8a060"/><circle cx="5.0" cy="5.5" r=".95" fill="#e8d048"/><circle cx="7.4" cy="5.5" r=".95" fill="#7ac850"/><circle cx="2.6" cy="8.0" r=".95" fill="#e86050"/><circle cx="5.0" cy="8.0" r=".95" fill="#50b8e8"/><circle cx="7.4" cy="8.0" r=".95" fill="#58c858"/><circle cx="2.6" cy="10.5" r=".95" fill="#d060c0"/><circle cx="5.0" cy="10.5" r=".95" fill="#8070e0"/><circle cx="7.4" cy="10.5" r=".95" fill="#e87090"/></svg><div class="arrowr" style="left:15px;top:7.5px"></div></div>
 <div class="pinner" style="top:31.7px;height:168.3px;overflow:hidden">
  <!-- content box -->
  <div class="abs" style="left:7.5px;top:19.7px;width:167.5px;height:142.1px;border:1px solid #b9bdc2;background:#fff"></div>
  <!-- tabs -->
  <div class="tab" style="left:34.5px;width:42.5px"><span>Stroke</span></div>
  <div class="tab" style="left:76.5px;width:63.5px"><span>Stroke Style</span></div>
  <div class="tab sel" style="left:7.5px;width:27.5px"><span>Fill</span></div>

  <div class="lbl" style="left:12.5px;top:33px">Type:</div>
  <div class="sw" style="left:38px;top:30.2px;background:#fff"><svg width="12" height="11" style="position:absolute;left:0;top:0"><line x1="0" y1="11" x2="12" y2="0" stroke="#e8281c" stroke-width="1.400"/></svg></div>
  <div class="sw" style="left:51.5px;top:30.2px;background:#fff"></div>
  <div class="sw" style="left:65px;top:30.2px;background:linear-gradient(90deg,#000,#fff)"></div>
  <div class="sw" style="left:78.5px;top:30.2px;background:radial-gradient(circle at 50% 50%,#fff 0,#ddd 20%,#000 85%)"></div>
  <div class="lbl" style="left:112.6px;top:33px">Color:</div>
  <div class="sw" style="left:142px;top:29.8px;width:13.2px;height:13.2px;background:#f4f4f4"></div>
  <div class="abs" style="left:160px;top:31px;width:10.5px;height:10.5px;border-radius:50%;background:radial-gradient(circle,#fff 0,rgba(255,255,255,.4) 45%,rgba(255,255,255,0) 75%),conic-gradient(#ff9a9a,#ffe08a,#b8f08a,#8af0e0,#8ab0ff,#d89aff,#ff9ad0,#ff9a9a)"></div>

  <div class="lbl" style="left:12.5px;top:63.8px">Gradients:</div>
  <div class="abs" style="left:12px;top:78.3px;width:140px;height:11.5px;border:1px solid #cfcdf0;background:linear-gradient(90deg,#d4c020 0,#e6d828 22%,#dcc424 45%,#c8a01c 70%,#a07c10 88%,#70540a 100%)"></div>
  <svg style="position:absolute;left:34px;top:91.4px" width="8" height="8" viewBox="0 0 8 8"><path d="M4,0.800 L7.200,5.600 Q7.200,6.800 6,6.800 L2,6.800 Q0.800,6.800 0.800,5.600 Z" fill="#ece8a0" stroke="#c4bc70" stroke-width=".6" stroke-linejoin="round"/></svg><svg style="position:absolute;left:113.5px;top:91.4px" width="8" height="8" viewBox="0 0 8 8"><path d="M4,0.800 L7.200,5.600 Q7.200,6.800 6,6.800 L2,6.800 Q0.800,6.800 0.800,5.600 Z" fill="#e0cc90" stroke="#b8a468" stroke-width=".6" stroke-linejoin="round"/></svg><svg style="position:absolute;left:144px;top:91.4px" width="8" height="8" viewBox="0 0 8 8"><path d="M4,0.800 L7.200,5.600 Q7.200,6.800 6,6.800 L2,6.800 Q0.800,6.800 0.800,5.600 Z" fill="#d8c490" stroke="#a89464" stroke-width=".6" stroke-linejoin="round"/></svg>
  <div class="lbl" style="left:12.5px;top:116.2px">Spread</div>
  <div class="combo" style="left:44.5px;top:113.2px;width:107.5px;height:14.5px">
    <div class="lbl" style="left:5px;top:2.5px">pad</div>
    <div class="abs" style="left:93.5px;top:1px;width:1px;height:10.5px;background:#b8b8b8"></div>
    <div class="arrow" style="left:97.5px;top:5.5px"></div>
  </div>
  <div class="lbl" style="left:12.5px;top:133.8px">Focal</div>
  <div class="abs" style="left:42px;top:137.7px;width:107px;height:1.5px;background:#8c8c8c;border-radius:1px"></div>
  <div class="abs" style="left:67px;top:135px;width:7.5px;height:7.5px;border:1px solid #8a8a8a;border-radius:2px;background:#fafafa"><div class="abs" style="left:1.7px;top:1.5px;width:2.2px;height:2.5px;border-left:.7px solid #777;border-right:.7px solid #777"></div></div>
  <div class="abs" style="left:10.8px;top:146.6px;width:26.2px;height:20px;border:1px solid #b0b0b0;border-radius:3px;background:linear-gradient(#fff,#e4e4e4)">
    <div class="abs" style="left:7.5px;top:1.5px;width:9.5px;height:9.5px;border-radius:50%;background:radial-gradient(circle at 45% 35%,#9ad870,#4aa028 70%,#3a8a20)"></div>
    <div class="abs" style="left:10.8px;top:4.8px;width:3px;height:3px;background:#fff;border-radius:1px"></div>
  </div>
  <div class="abs" style="left:41.5px;top:146.6px;width:111px;height:20px;border:1px solid #c4c4c4;background:#fff"></div>
  <!-- mask below content box -->
    <div class="abs" style="left:0;top:157.8px;width:181.5px;height:12px;background:#fff"></div>
  <div class="abs" style="left:7.5px;top:157px;width:1px;height:4.5px;background:#b9bdc2"></div><div class="abs" style="left:174px;top:157px;width:1px;height:4.5px;background:#b9bdc2"></div>
  <div class="abs" style="left:7.5px;top:160.8px;width:167.5px;height:1px;background:#b9bdc2"></div>

  <!-- scrollbar -->
  <div class="abs" style="left:159.5px;top:46.6px;width:10.5px;height:111px;background:#e2e2e2;border:1px solid #4a5c74">
    <div class="abs" style="left:0;top:0;width:8.5px;height:10px;background:linear-gradient(#6d99d0,#86abdc);border-bottom:1px solid #4a6a96"></div>
    <div class="abs" style="left:1.8px;top:3px;width:0;height:0;border-left:2.5px solid transparent;border-right:2.5px solid transparent;border-bottom:3px solid #eaf2ff"></div>
    <div class="abs" style="left:0;top:10.5px;width:8.5px;height:76px;background:linear-gradient(90deg,#b4cdee,#8fb2e2 50%,#6a94cc);border-bottom:1px solid #4a6a96"></div>
    <div class="abs" style="left:2.8px;top:46px;width:3px;height:6px;background:repeating-linear-gradient(#4a6a96 0,#4a6a96 .7px,transparent .7px,transparent 1.5px)"></div>
    <div class="abs" style="left:0;top:100px;width:8.5px;height:9.5px;background:linear-gradient(#86abdc,#6d99d0);border-top:1px solid #4a6a96"></div>
    <div class="abs" style="left:1.8px;top:104px;width:0;height:0;border-left:2.5px solid transparent;border-right:2.5px solid transparent;border-top:3px solid #eaf2ff"></div>
  </div>
 </div>
</div>

</body></html>
